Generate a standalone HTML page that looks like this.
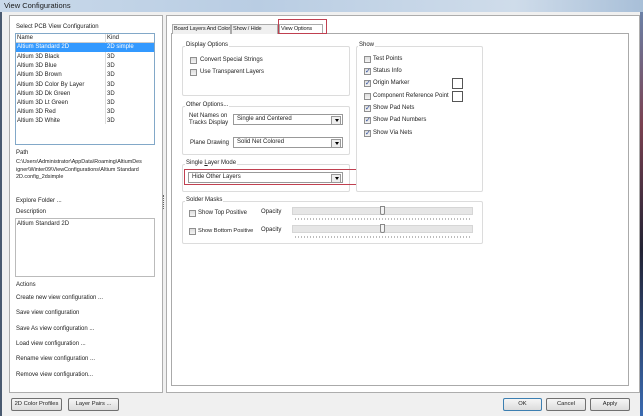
<!DOCTYPE html>
<html><head><style>
*{margin:0;padding:0;box-sizing:border-box}
body{width:643px;height:416px;overflow:hidden;background:#f0f0f0;font-family:"Liberation Sans",sans-serif;font-size:6px;color:#222;position:relative}
.a{position:absolute;white-space:nowrap}
.title{left:0;top:0;width:643px;height:12px;background:linear-gradient(90deg,#c9d9ea,#b9cde3 40%,#cfdcea 80%,#a8bfd8);}
.title span{position:absolute;left:4px;top:1px;font-size:7.5px;color:#1a1a1a}
.box{border:1px solid #adadad;background:#fff}
.grp{border:1px solid #dcdcdc;border-radius:2px}
.lbl{position:absolute;background:#fff;padding:0 1px;white-space:nowrap}
.cb{position:absolute;width:7px;height:7px;border:1px solid #8f8f8f;background:linear-gradient(#ddd,#f4f4f4)}
.cb.on::after{content:"✓";position:absolute;left:0;top:-2px;font-size:7px;color:#2a4a9a}
.dd{position:absolute;height:11px;border:1px solid #999;background:#fff;padding:1px 3px;white-space:nowrap}
.dd::after{content:"";position:absolute;right:1px;top:1px;width:8px;height:7px;border:1px solid #999;background:#eee}
.dd i{position:absolute;right:3px;top:4px;border:2px solid transparent;border-top:3px solid #000;z-index:2}
.btn{position:absolute;height:13px;border:1px solid #707070;border-radius:2px;background:linear-gradient(#f6f6f6,#dcdcdc);text-align:center;line-height:11px;white-space:nowrap;font-size:5.8px}
.slider{position:absolute;height:8px;background:#e6e6e6;border:1px solid #d6d6d6}
.ticks{position:absolute;height:2px;background:repeating-linear-gradient(90deg,#bbb 0 1px,transparent 1px 3px)}
.thumb{position:absolute;width:5px;height:9px;border:1px solid #888;border-radius:0 0 2px 2px;background:#f4f4f4}
.tab{position:absolute;height:10px;border:1px solid #aaa;border-bottom:none;background:#f0f0f0;padding:1px 1px;white-space:nowrap;font-size:5.6px;letter-spacing:-0.15px;overflow:hidden}
</style></head><body>
<div class="a" style="left:0;top:0;width:2px;height:416px;background:#4a5a70"></div>
<div class="a" style="left:640px;top:0;width:3px;height:416px;background:linear-gradient(#6a88b0,#7a4050 30%,#223 60%,#3a6ab0)"></div>
<div class="a title"><span>View Configurations</span></div>

<div class="a box" style="left:9px;top:15px;width:154px;height:378px"></div>
<div class="a" style="left:16px;top:24px">Select PCB View Configuration</div>
<div class="a" style="left:15px;top:33px;width:140px;height:112px;border:1px solid #82a8c8;background:#fff"></div>
<div class="a" style="left:16px;top:34px;width:138px;height:9px;border-bottom:1px solid #ccc"></div>
<div class="a" style="left:105px;top:34px;width:1px;height:90px;background:#ddd"></div>
<div class="a" style="left:17px;top:35px">Name</div><div class="a" style="left:107px;top:35px">Kind</div>
<div class="a" style="left:16px;top:43px;width:138px;height:9px;background:#3399ff"></div>
<div class="a" style="left:17px;top:44px;color:#fff">Altium Standard 2D</div><div class="a" style="left:107px;top:44px;color:#fff">2D simple</div>
<div class="a" style="left:17px;top:53px;line-height:9.2px">Altium 3D Black<br>Altium 3D Blue<br>Altium 3D Brown<br>Altium 3D Color By Layer<br>Altium 3D Dk Green<br>Altium 3D Lt Green<br>Altium 3D Red<br>Altium 3D White</div>
<div class="a" style="left:107px;top:53px;line-height:9.2px">3D<br>3D<br>3D<br>3D<br>3D<br>3D<br>3D<br>3D</div>
<div class="a" style="left:16px;top:150px">Path</div>
<div class="a" style="left:16px;top:159px;line-height:7.5px;font-size:5.4px">C:\Users\Administrator\AppData\Roaming\AltiumDes<br>igner\Winter09\ViewConfigurations\Altium Standard<br>2D.config_2dsimple</div>
<div class="a" style="left:16px;top:198px">Explore Folder ...</div>
<div class="a" style="left:16px;top:209px">Description</div>
<div class="a" style="left:15px;top:218px;width:140px;height:59px;border:1px solid #bbb;background:#fff"></div>
<div class="a" style="left:17px;top:221px">Altium Standard 2D</div>
<div class="a" style="left:16px;top:282px">Actions</div>
<div class="a" style="left:16px;top:295px">Create new view configuration ...</div>
<div class="a" style="left:16px;top:310px">Save view configuration</div>
<div class="a" style="left:16px;top:326px">Save As view configuration ...</div>
<div class="a" style="left:16px;top:341px">Load view configuration ...</div>
<div class="a" style="left:16px;top:356px">Rename view configuration ...</div>
<div class="a" style="left:16px;top:372px">Remove view configuration...</div>
<div class="a" style="left:163px;top:195px;width:1px;height:14px;border-left:1px dotted #666"></div>

<div class="a box" style="left:166px;top:15px;width:474px;height:378px"></div>
<div class="a" style="left:171px;top:33px;width:458px;height:353px;border:1px solid #aaa;background:#fff"></div>
<div class="tab" style="left:172px;top:24px;width:59px">Board Layers And Colors</div>
<div class="tab" style="left:231px;top:24px;width:47px">Show / Hide</div>
<div class="tab" style="left:279px;top:24px;width:44px;background:#fff">View Options</div>
<div class="a" style="left:278px;top:19px;width:49px;height:15px;border:1px solid #c04050"></div>

<div class="a grp" style="left:182px;top:46px;width:168px;height:50px"></div><div class="lbl" style="left:185px;top:42px">Display Options</div>
<div class="cb" style="left:190px;top:57px"></div><div class="a" style="left:200px;top:57px">Convert Special Strings</div>
<div class="cb" style="left:190px;top:69px"></div><div class="a" style="left:200px;top:69px">Use Transparent Layers</div>

<div class="a grp" style="left:182px;top:106px;width:168px;height:49px"></div><div class="lbl" style="left:185px;top:102px">Other Options...</div>
<div class="a" style="left:189px;top:113px;line-height:7px">Net Names on<br>Tracks Display</div>
<div class="dd" style="left:233px;top:114px;width:110px">Single and Centered<i></i></div>
<div class="a" style="left:190px;top:140px">Plane Drawing</div>
<div class="dd" style="left:233px;top:137px;width:110px">Solid Net Colored<i></i></div>

<div class="a grp" style="left:182px;top:164px;width:168px;height:28px"></div><div class="lbl" style="left:185px;top:160px">Single <u>L</u>ayer Mode</div>
<div class="dd" style="left:188px;top:172px;width:155px">Hide Other Layers<i></i></div>
<div class="a" style="left:184px;top:169px;width:173px;height:16px;border:1px solid #c04050"></div>

<div class="a grp" style="left:356px;top:46px;width:127px;height:146px"></div><div class="lbl" style="left:358px;top:42px">Show</div>
<div class="cb" style="left:364px;top:56px"></div><div class="a" style="left:373px;top:56px">Test Points</div>
<div class="cb on" style="left:364px;top:68px"></div><div class="a" style="left:373px;top:68px">Status Info</div>
<div class="cb on" style="left:364px;top:80px"></div><div class="a" style="left:373px;top:80px">Origin Marker</div>
<div class="a" style="left:452px;top:78px;width:11px;height:11px;border:1px solid #555;background:#fff"></div>
<div class="cb" style="left:364px;top:93px"></div><div class="a" style="left:373px;top:93px">Component Reference Point</div>
<div class="a" style="left:452px;top:91px;width:11px;height:11px;border:1px solid #555;background:#fff"></div>
<div class="cb on" style="left:364px;top:105px"></div><div class="a" style="left:373px;top:105px">Show Pad Nets</div>
<div class="cb on" style="left:364px;top:117px"></div><div class="a" style="left:373px;top:117px">Show Pad Numbers</div>
<div class="cb on" style="left:364px;top:130px"></div><div class="a" style="left:373px;top:130px">Show Via Nets</div>

<div class="a grp" style="left:182px;top:201px;width:301px;height:43px"></div><div class="lbl" style="left:185px;top:197px">Solder Masks</div>
<div class="cb" style="left:189px;top:210px"></div><div class="a" style="left:198px;top:210px">Show Top Positive</div>
<div class="a" style="left:261px;top:209px">Opacity</div>
<div class="slider" style="left:292px;top:207px;width:181px"></div><div class="ticks" style="left:295px;top:218px;width:176px"></div><div class="thumb" style="left:380px;top:206px"></div>
<div class="cb" style="left:189px;top:228px"></div><div class="a" style="left:198px;top:228px;font-size:5.7px">Show Bottom Positive</div>
<div class="a" style="left:261px;top:227px">Opacity</div>
<div class="slider" style="left:292px;top:225px;width:181px"></div><div class="ticks" style="left:295px;top:236px;width:176px"></div><div class="thumb" style="left:380px;top:224px"></div>

<div class="btn" style="left:11px;top:398px;width:51px">2D Color Profiles</div>
<div class="btn" style="left:68px;top:398px;width:51px">Layer Pairs ...</div>
<div class="btn" style="left:503px;top:398px;width:39px;border-color:#3c7fb1">OK</div>
<div class="btn" style="left:546px;top:398px;width:40px">Cancel</div>
<div class="btn" style="left:590px;top:398px;width:40px">Apply</div>
</body></html>
